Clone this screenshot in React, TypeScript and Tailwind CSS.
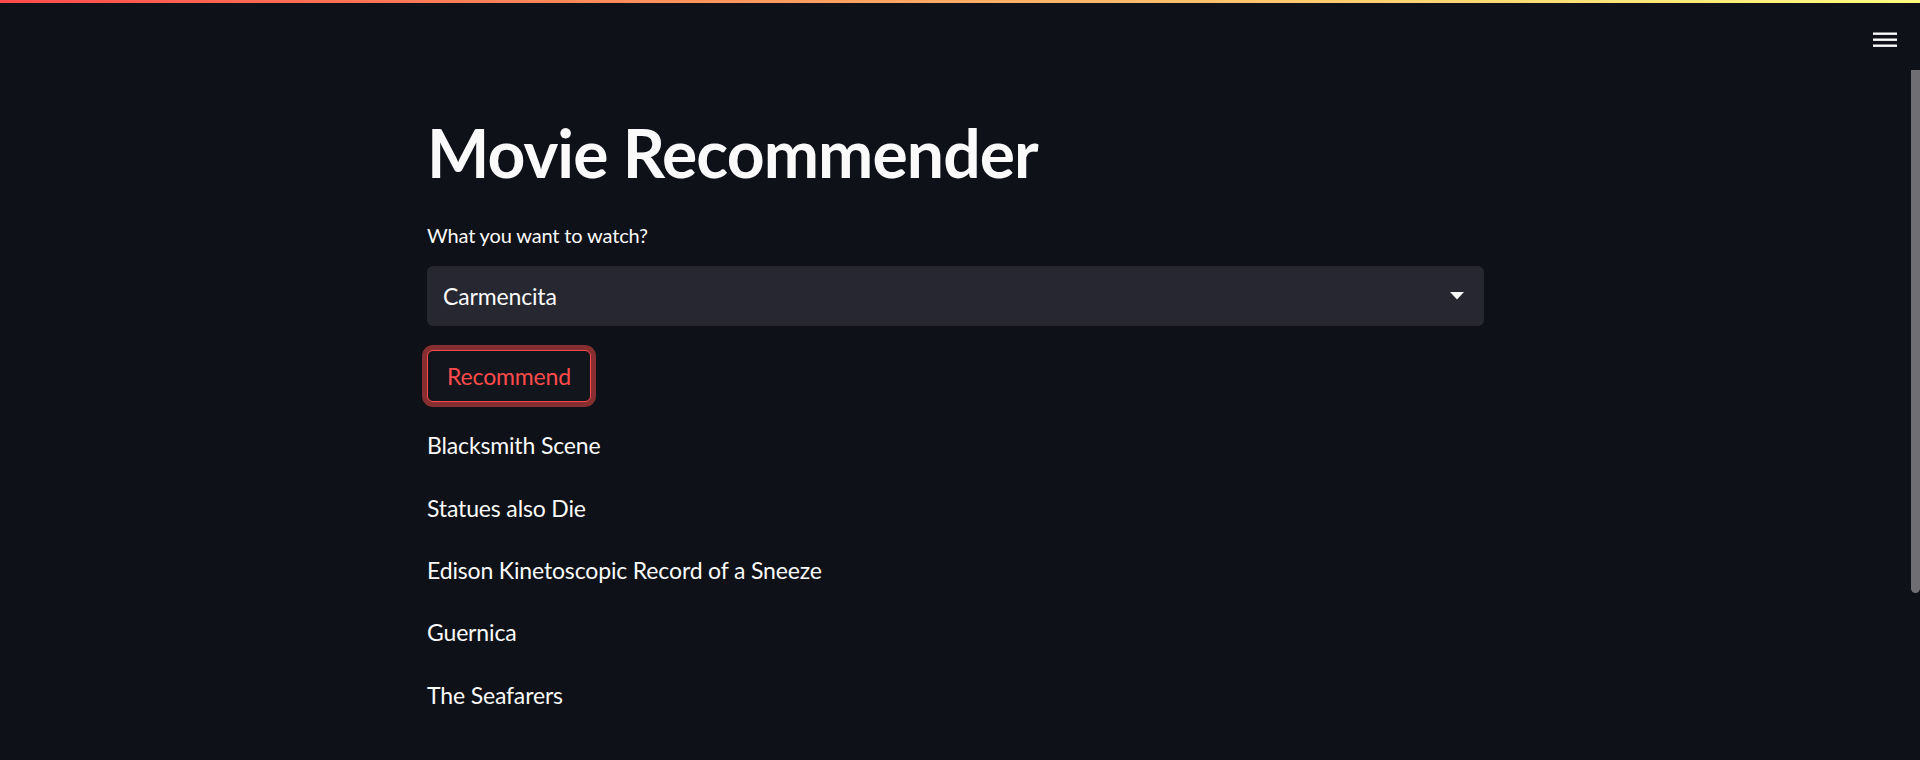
import React from "react";

const results = [
  "Blacksmith Scene",
  "Statues also Die",
  "Edison Kinetoscopic Record of a Sneeze",
  "Guernica",
  "The Seafarers",
];

export default function App() {
  return (
    <div className="relative h-[760px] overflow-hidden bg-[#0e1117] font-['Lato','Noto_Sans',sans-serif] text-[#fafafa]">
      {/* header overlay */}
      <div className="absolute left-0 right-0 top-0 z-10 h-[3px] bg-linear-to-r from-[#ff4b4b] to-[#fffd80]" />
      <button className="absolute right-[22px] top-[29px] z-10 flex h-[20px] w-[26px] items-center justify-center">
        <svg width="24" height="18" viewBox="0 0 24 18" fill="none">
          <rect x="0" y="2.5" width="24" height="2.4" fill="#fafafa" />
          <rect x="0" y="8.5" width="24" height="2.4" fill="#fafafa" />
          <rect x="0" y="14.5" width="24" height="2.4" fill="#fafafa" />
        </svg>
      </button>

      <div className="flex h-full">
        <main className="flex-1">
          <div className="mx-auto w-[1057px] pt-[113px]">
            <h1 className="text-[66px] font-bold leading-[1.2] tracking-[-0.9px]">
              Movie Recommender
            </h1>

            <div className="mt-[26px] flex flex-col">
              <label className="h-[34px] text-[20px] leading-[34px] tracking-[-0.15px]">
                What you want to watch?
              </label>
              <div className="mt-[14px] flex h-[60px] items-center justify-between rounded-[6px] bg-[#262730] pl-[16px] pr-[20px]">
                <span className="text-[23px] tracking-[-0.15px]">Carmencita</span>
                <svg width="14" height="8" viewBox="0 0 14 8">
                  <path d="M0 0 L14 0 L7 7.5 Z" fill="#fafafa" />
                </svg>
              </div>
            </div>

            <button className="mt-[24px] flex h-[52px] w-[164px] items-center justify-center rounded-[6px] border border-[#ff4b4b] bg-[#12151c] text-[23px] tracking-[-0.15px] text-[#ff4b4b] shadow-[0_0_0_5px_rgba(255,75,75,0.5)]">
              Recommend
            </button>

            <div className="mt-[24px] flex flex-col gap-[24px]">
              {results.map((r) => (
                <p key={r} className="h-[38.4px] text-[23px] leading-[38.4px] tracking-[-0.15px]">
                  {r}
                </p>
              ))}
            </div>
          </div>
        </main>
        <div className="w-[9px] shrink-0">
          <div className="mt-[70px] h-[523px] rounded-b-[5px] bg-[#6e6e73]" />
        </div>
      </div>
    </div>
  );
}
